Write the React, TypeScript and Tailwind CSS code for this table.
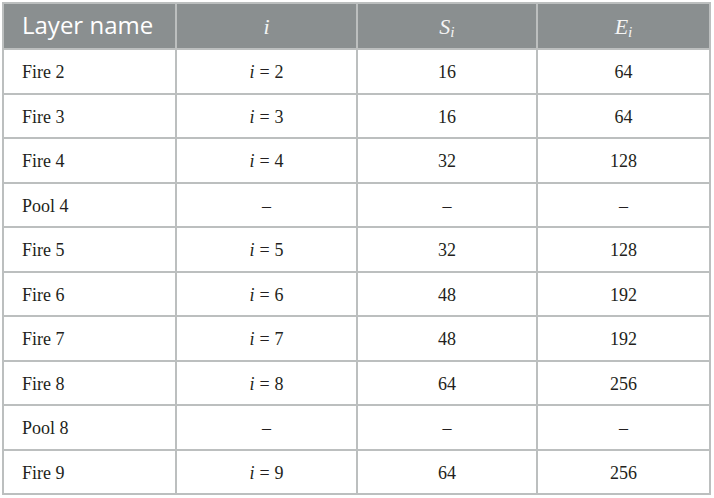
import React from "react";

type Row = { name: string; i: string | null; s: string; e: string; h: string };

const rows: Row[] = [
  { name: "Fire 2", i: "2", s: "16", e: "64", h: "h-[45px]" },
  { name: "Fire 3", i: "3", s: "16", e: "64", h: "h-[44px]" },
  { name: "Fire 4", i: "4", s: "32", e: "128", h: "h-[45px]" },
  { name: "Pool 4", i: null, s: "–", e: "–", h: "h-[44px]" },
  { name: "Fire 5", i: "5", s: "32", e: "128", h: "h-[45px]" },
  { name: "Fire 6", i: "6", s: "48", e: "192", h: "h-[44px]" },
  { name: "Fire 7", i: "7", s: "48", e: "192", h: "h-[45px]" },
  { name: "Fire 8", i: "8", s: "64", e: "256", h: "h-[44px]" },
  { name: "Pool 8", i: null, s: "–", e: "–", h: "h-[45px]" },
  { name: "Fire 9", i: "9", s: "64", e: "256", h: "h-[44px]" },
];

const cols = "grid grid-cols-[173px_181px_180px_173px]";
const cell = "flex items-center border-r-2 border-b-2 border-[#bcbfbf]";

const Sub = ({ base }: { base: string }) => (
  <span className="italic">
    {base}
    <sub className="text-[0.7em] italic">i</sub>
  </span>
);

export default function App() {
  return (
    <div className="bg-white w-[714px] h-[498px] pt-[2px] pl-[2px]">
      <div className="w-[709px] border-l-2 border-t-2 border-[#bcbfbf] font-['Liberation_Serif',serif] text-[18px] text-[#231f20]">
        <div className={`${cols} h-[46px] bg-[#8a8f90] text-[#f4f4f4]`}>
          <div className={`${cell} border-[#a7abab] pl-[18px] pb-[2px] font-['Open_Sans',sans-serif] text-[24px] text-white`}>
            Layer name
          </div>
          <div className={`${cell} border-[#a7abab] justify-center text-[22px] italic`}>i</div>
          <div className={`${cell} border-[#a7abab] justify-center text-[22px]`}>
            <Sub base="S" />
          </div>
          <div className={`${cell} border-[#a7abab] justify-center text-[22px]`}>
            <Sub base="E" />
          </div>
        </div>
        {rows.map((r) => (
          <div key={r.name} className={`${cols} ${r.h}`}>
            <div className={`${cell} pl-[18px] pt-[2px]`}>{r.name}</div>
            <div className={`${cell} justify-center pt-[2px]`}>
              {r.i ? (
                <span>
                  <span className="italic">i</span>
                  <span className="mx-[5px]">=</span>
                  {r.i}
                </span>
              ) : (
                "–"
              )}
            </div>
            <div className={`${cell} justify-center pt-[2px]`}>{r.s}</div>
            <div className={`${cell} justify-center pt-[2px]`}>{r.e}</div>
          </div>
        ))}
      </div>
    </div>
  );
}
